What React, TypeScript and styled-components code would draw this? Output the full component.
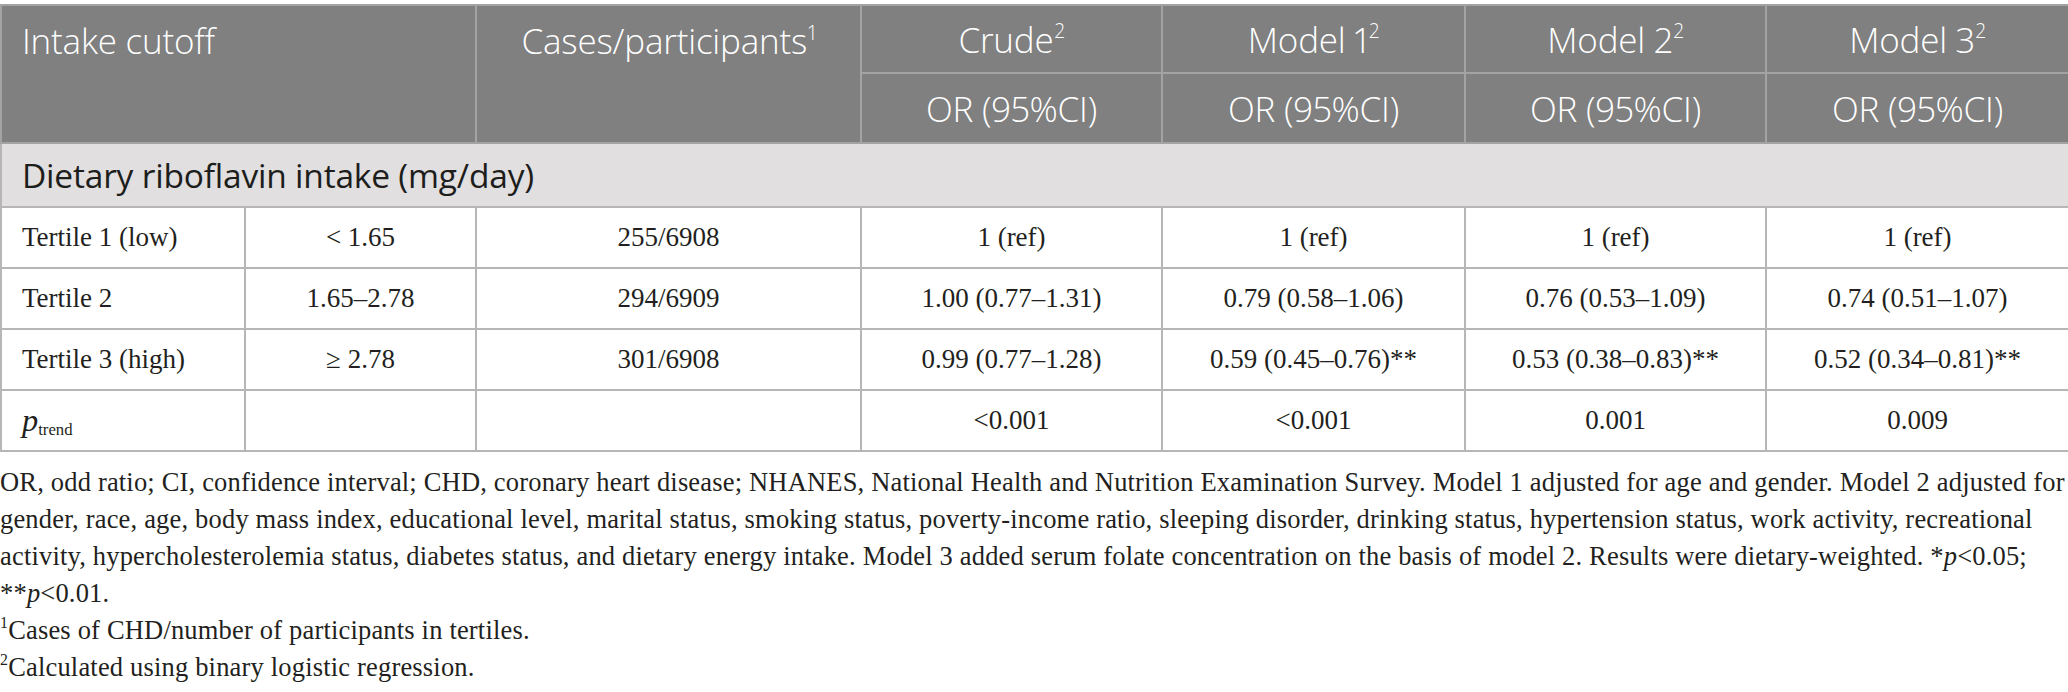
import styled, { createGlobalStyle } from "styled-components";

const GlobalStyle = createGlobalStyle`
  html, body {
    margin: 0;
    padding: 0;
    background: #ffffff;
  }
`;

const Page = styled.div`
  width: 2068px;
  padding-top: 4px;
`;

const Table = styled.table`
  width: 2068px;
  border-collapse: collapse;
  table-layout: fixed;
  border: 2px solid #b6b6b6;
`;

const HeadCell = styled.th<{ $left?: boolean; $top?: boolean }>`
  background: #7f807f;
  color: #ffffff;
  font-family: "Open Sans", "Lato", sans-serif;
  font-weight: 300;
  font-size: 35px;
  letter-spacing: -0.2px;
  font-variant-numeric: proportional-nums;
  text-align: ${(p) => (p.$left ? "left" : "center")};
  vertical-align: ${(p) => (p.$top ? "top" : "middle")};
  padding: ${(p) => (p.$top ? "11px 20px 0" : "0 20px")};
  border: 2px solid #a2a3a2;
  white-space: nowrap;
`;

const HeadRow = styled.tr<{ $h: number }>`
  height: ${(p) => p.$h}px;
`;

const SectionCell = styled.td`
  background: #e1dfe0;
  color: #1d1d1b;
  font-family: "Open Sans", "Lato", sans-serif;
  font-weight: 400;
  font-size: 33.5px;
  letter-spacing: -0.2px;
  padding: 0 20px;
  height: 62px;
  border: 2px solid #b6b6b6;
`;

const Row = styled.tr`
  height: 61px;
`;

const Cell = styled.td<{ $left?: boolean }>`
  font-family: "Liberation Serif", "Times New Roman", serif;
  font-size: 27px;
  color: #231f20;
  text-align: ${(p) => (p.$left ? "left" : "center")};
  padding: 0 20px;
  border: 2px solid #b6b6b6;
  white-space: nowrap;
`;

const Sup = styled.sup`
  font-size: 0.55em;
  vertical-align: 0.75em;
  line-height: 0;
  margin-left: 1px;
`;

const P = styled.i`
  font-size: 1.2em;
`;

const Sub = styled.sub`
  font-size: 0.62em;
  vertical-align: -0.25em;
  line-height: 0;
`;

const Notes = styled.div`
  margin-top: 12px;
  font-family: "Liberation Serif", "Times New Roman", serif;
  font-size: 26.5px;
  line-height: 37px;
  color: #231f20;
  white-space: nowrap;
  letter-spacing: 0.18px;
`;

const NoteLine = styled.div``;

const NoteSup = styled.sup`
  font-size: 0.6em;
  vertical-align: 0.7em;
  line-height: 0;
`;

const rows = [
  ["Tertile 1 (low)", "< 1.65", "255/6908", "1 (ref)", "1 (ref)", "1 (ref)", "1 (ref)"],
  ["Tertile 2", "1.65–2.78", "294/6909", "1.00 (0.77–1.31)", "0.79 (0.58–1.06)", "0.76 (0.53–1.09)", "0.74 (0.51–1.07)"],
  ["Tertile 3 (high)", "≥ 2.78", "301/6908", "0.99 (0.77–1.28)", "0.59 (0.45–0.76)**", "0.53 (0.38–0.83)**", "0.52 (0.34–0.81)**"],
];

const widths = [244, 231, 385, 301, 303, 301, 303];

export default function App() {
  return (
    <Page>
      <GlobalStyle />
      <Table>
        <colgroup>
          {widths.map((w, i) => (
            <col key={i} style={{ width: w }} />
          ))}
        </colgroup>
        <thead>
          <HeadRow $h={68}>
            <HeadCell colSpan={2} rowSpan={2} $left $top>
              Intake cutoff
            </HeadCell>
            <HeadCell rowSpan={2} $top>
              Cases/participants<Sup>1</Sup>
            </HeadCell>
            <HeadCell>
              Crude<Sup>2</Sup>
            </HeadCell>
            <HeadCell>
              Model 1<Sup>2</Sup>
            </HeadCell>
            <HeadCell>
              Model 2<Sup>2</Sup>
            </HeadCell>
            <HeadCell>
              Model 3<Sup>2</Sup>
            </HeadCell>
          </HeadRow>
          <HeadRow $h={70}>
            <HeadCell>OR (95%CI)</HeadCell>
            <HeadCell>OR (95%CI)</HeadCell>
            <HeadCell>OR (95%CI)</HeadCell>
            <HeadCell>OR (95%CI)</HeadCell>
          </HeadRow>
        </thead>
        <tbody>
          <tr>
            <SectionCell colSpan={7}>Dietary riboflavin intake (mg/day)</SectionCell>
          </tr>
          {rows.map((r) => (
            <Row key={r[0]}>
              {r.map((c, i) => (
                <Cell key={i} $left={i === 0}>
                  {c}
                </Cell>
              ))}
            </Row>
          ))}
          <Row>
            <Cell $left>
              <P>p</P>
              <Sub>trend</Sub>
            </Cell>
            <Cell />
            <Cell />
            <Cell>&lt;0.001</Cell>
            <Cell>&lt;0.001</Cell>
            <Cell>0.001</Cell>
            <Cell>0.009</Cell>
          </Row>
        </tbody>
      </Table>
      <Notes>
        <NoteLine>
          OR, odd ratio; CI, confidence interval; CHD, coronary heart disease; NHANES, National Health and Nutrition Examination Survey. Model 1 adjusted for age and gender. Model 2 adjusted for
        </NoteLine>
        <NoteLine>
          gender, race, age, body mass index, educational level, marital status, smoking status, poverty-income ratio, sleeping disorder, drinking status, hypertension status, work activity, recreational
        </NoteLine>
        <NoteLine>
          activity, hypercholesterolemia status, diabetes status, and dietary energy intake. Model 3 added serum folate concentration on the basis of model 2. Results were dietary-weighted. *<i>p</i>&lt;0.05;
        </NoteLine>
        <NoteLine>
          **<i>p</i>&lt;0.01.
        </NoteLine>
        <NoteLine>
          <NoteSup>1</NoteSup>Cases of CHD/number of participants in tertiles.
        </NoteLine>
        <NoteLine>
          <NoteSup>2</NoteSup>Calculated using binary logistic regression.
        </NoteLine>
      </Notes>
    </Page>
  );
}
